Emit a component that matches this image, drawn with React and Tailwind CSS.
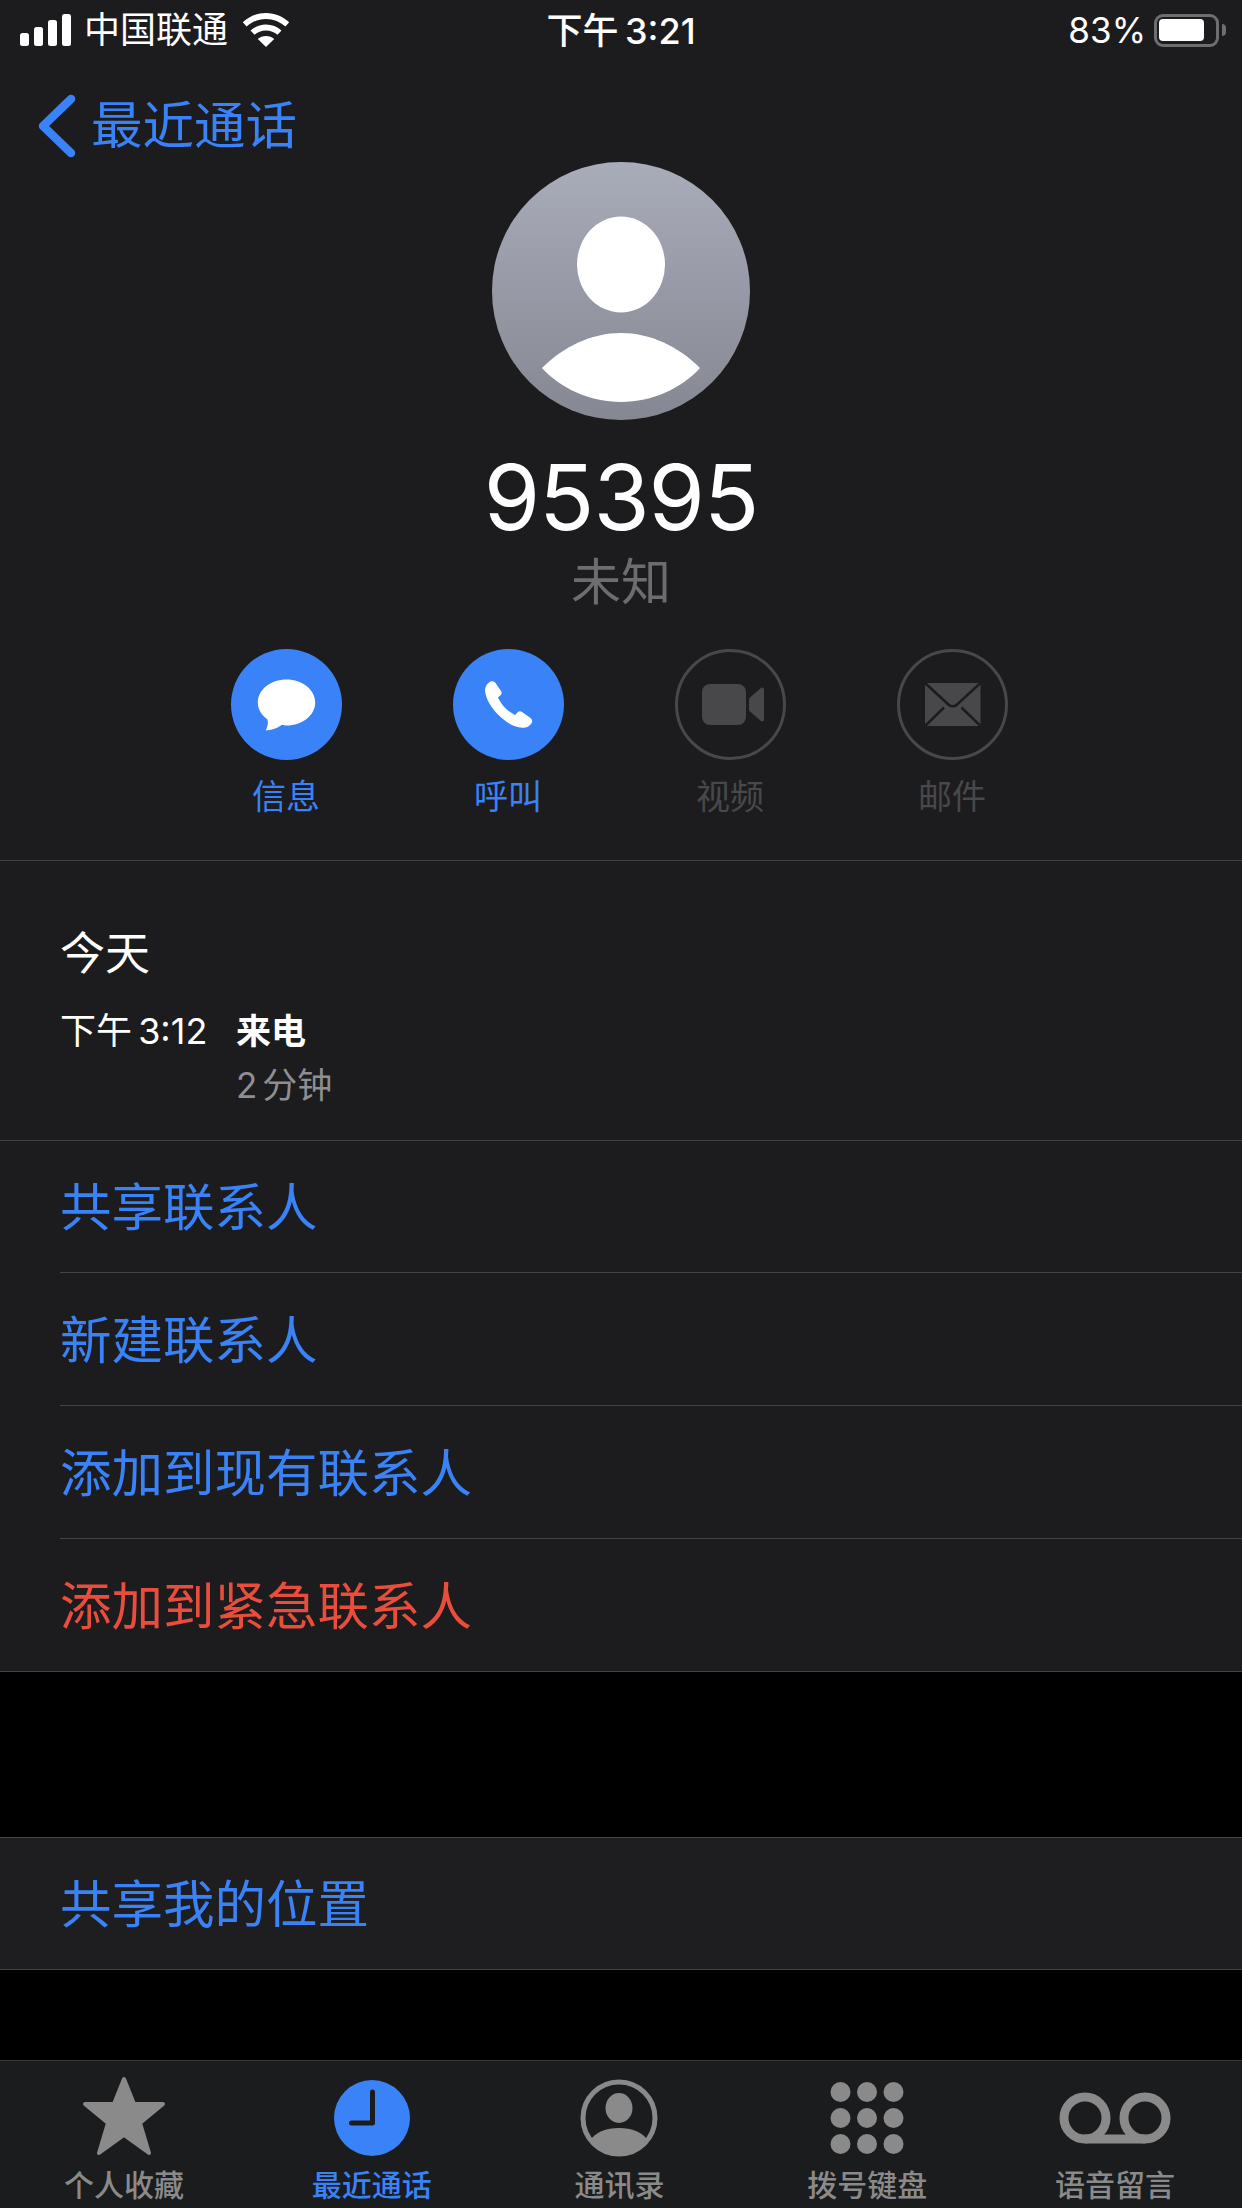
import React from 'react';

const FONT = 'font-[Inter,"Noto_Sans_CJK_SC",sans-serif]';

function StatusBar() {
  return (
    <div className="grid grid-cols-3 h-[60px] text-white">
      <div className="flex items-center pl-[20px]">
        <svg width="52" height="34" viewBox="0 0 52 34" className="fill-white">
          <rect x="0" y="20" width="9" height="13" rx="2.5" />
          <rect x="14" y="14" width="9" height="19" rx="2.5" />
          <rect x="28" y="7" width="9" height="26" rx="2.5" />
          <rect x="42" y="1" width="9" height="32" rx="2.5" />
        </svg>
        <span className="ml-[12px] text-[36px] leading-none">中国联通</span>
        <svg width="48" height="34" viewBox="0 0 48 34" className="ml-[14px] fill-white">
          <path d="M24 0C15 0 7 3.500 .8 9.300L4.600 13.600C9.700 9 16.500 6 24 6s14.300 3 19.400 7.600l3.800-4.300C41 3.500 33 0 24 0Z" />
          <path d="M24 11.500c-6 0-11.400 2.300-15.500 6l4 4.300c3-2.700 7-4.300 11.500-4.300s8.500 1.600 11.500 4.300l4-4.300c-4.100-3.700-9.500-6-15.500-6Z" />
          <path d="M24 23c-3.200 0-6 1.200-8.200 3.100L24 34l8.200-7.900C30 24.200 27.200 23 24 23Z" />
        </svg>
      </div>
      <div className="flex items-center justify-center pt-[2px] text-[36px] font-medium leading-none [word-spacing:-3px]">下午 3:21</div>
      <div className="flex items-center justify-end pr-[16px]">
        <span className="text-[35px] leading-none">83%</span>
        <div className="ml-[8px] flex h-[33px] w-[65px] items-center rounded-[9px] border-[3px] border-[#6e6e70] pl-[2px]">
          <div className="h-[22px] w-[45px] rounded-[4px] bg-white" />
        </div>
        <div className="ml-[3px] h-[12px] w-[4px] rounded-r-full bg-[#6e6e70]" />
      </div>
    </div>
  );
}

function Avatar() {
  return (
    <svg width="258" height="258" viewBox="0 0 258 258">
      <defs>
        <linearGradient id="avatarBg" x1="0" y1="0" x2="0" y2="1">
          <stop offset="0" stopColor="#a9acb9" />
          <stop offset="1" stopColor="#858892" />
        </linearGradient>
      </defs>
      <circle cx="129" cy="129" r="129" fill="url(#avatarBg)" />
      <ellipse cx="129" cy="102.500" rx="44" ry="48" fill="#fff" />
      <path d="M50 206C72 184 100 171 129 171C158 171 186 184 208 206C190 226 160 240 129 240C98 240 68 226 50 206Z" fill="#fff" />
    </svg>
  );
}

function ActionButton({ label, active, children }) {
  return (
    <div className="flex w-[222px] flex-col items-center">
      <svg width="111" height="111" viewBox="0 0 111 111">
        {active ? (
          <circle cx="55.500" cy="55.500" r="55.500" fill="#3a82f7" />
        ) : (
          <circle cx="55.500" cy="55.500" r="54" fill="none" stroke="#48484a" strokeWidth="3" />
        )}
        {children}
      </svg>
      <div className={`mt-[12px] h-[50px] text-[34px] leading-[50px] ${active ? 'text-[#3a82f7]' : 'text-[#48484a]'}`}>
        {label}
      </div>
    </div>
  );
}

function ListRow({ label, color = 'text-[#3a82f7]', inset = true, height = 'h-[133px]' }) {
  return (
    <div className={`flex items-center border-b border-[#444446] pt-[3px] ${height} ${inset ? 'ml-[60px]' : 'pl-[60px]'}`}>
      <span className={`text-[51.500px] leading-none ${color}`}>{label}</span>
    </div>
  );
}

function TabItem({ label, active, children }) {
  return (
    <div className="flex flex-col items-center">
      <svg width="120" height="90" viewBox="0 0 120 90">{children}</svg>
      <div className={`h-[44px] text-[30px] font-medium leading-[44px] ${active ? 'text-[#3a82f7]' : 'text-[#8a8a8a]'}`}>
        {label}
      </div>
    </div>
  );
}

export default function App() {
  return (
    <div className={`flex h-[2208px] w-[1242px] flex-col overflow-hidden bg-black ${FONT}`}>
      <div className="bg-[#1c1c1e]">
        <StatusBar />

        {/* Back */}
        <div className="flex h-[102px] items-center pl-[38px] pt-[30px]">
          <svg width="38" height="64" viewBox="0 0 38 64" fill="none" stroke="#3a82f7" strokeWidth="8.500" strokeLinecap="round" strokeLinejoin="round">
            <path d="M33 5L5 32L33 59" />
          </svg>
          <span className="ml-[15px] text-[51.500px] leading-none text-[#3a82f7]">最近通话</span>
        </div>

        {/* Contact header */}
        <div className="flex flex-col items-center border-b border-[#444446] pb-[38px]">
          <Avatar />
          <div className="mt-[22px] h-[110px] text-[91px] font-normal leading-[110px] tracking-[-1px] text-white">95395</div>
          <div className="h-[60px] text-[50px] leading-[60px] text-[#6d6d70]">未知</div>
          <div className="mt-[37px] mr-[4px] flex">
            <ActionButton label="信息" active>
              <path d="M55.500 30.500C39.600 30.500 26.800 40.800 26.800 53.500C26.800 60.300 30.500 66.300 36.500 70.500C37.500 74 36.500 78 34.700 81.500C40 81.500 46 79.500 51 75.800C52.500 76 54 76.500 55.500 76.500C71.400 76.500 84.200 66.200 84.200 53.500C84.200 40.800 71.400 30.500 55.500 30.500Z" fill="#fff" />
            </ActionButton>
            <ActionButton label="呼叫" active>
              <path d="M36 33.500C38 31.500 41 32 42.500 34L48 42C49 43.500 48.800 45 47.500 46.200L45 48.500C47 53 49.500 56 52 58.800C55 61.800 58 64 62 66L64.500 63.500C65.800 62.200 67.500 62 69 63L77.500 69C79.500 70.500 79.800 73 78 75C75.500 77.800 73 79 69.500 78.800C60 78 52 72.500 45.500 66C38 58.500 33 50 32 42C31.800 38.500 33.500 35.500 36 33.500Z" fill="#fff" />
            </ActionButton>
            <ActionButton label="视频">
              <rect x="27" y="35" width="44" height="41" rx="8" fill="#48484a" />
              <path d="M75 48.500L86 39C87.500 38 89 38.800 89 40.500V70.500C89 72.200 87.500 73 86 72L75 62.500C74.300 62 74 61 74 60V51C74 50 74.300 49 75 48.500Z" fill="#48484a" />
            </ActionButton>
            <ActionButton label="邮件">
              <path d="M28 34H83.500V77H28Z" fill="#48484a" />
              <path d="M28 34L52 56C54 57.800 57.500 57.800 59.500 56L83.500 34M28 77L47 58.500M83.500 77L64.500 58.500" fill="none" stroke="#1c1c1e" strokeWidth="2.500" />
            </ActionButton>
          </div>
        </div>

        {/* Call history */}
        <div className="h-[280px] border-b border-[#444446] pl-[60px] pt-[61px]">
          <div className="h-[64px] text-[45px] leading-[64px] text-white">今天</div>
          <div className="mt-[20px] flex">
            <div className="w-[176px] text-[36px] leading-[50px] text-white [word-spacing:-4px]">下午 3:12</div>
            <div>
              <div className="text-[35px] font-semibold leading-[50px] text-white">来电</div>
              <div className="mt-[4px] text-[35px] leading-[50px] text-[#8e8e93] [word-spacing:-5px]">2 分钟</div>
            </div>
          </div>
        </div>

        <ListRow label="共享联系人" height="h-[132px]" />
        <ListRow label="新建联系人" />
        <ListRow label="添加到现有联系人" />
        <ListRow label="添加到紧急联系人" color="text-[#eb4d3d]" inset={false} />
      </div>

      {/* Share location */}
      <div className="mt-[165px] border-t border-[#444446] bg-[#1e1e20]">
        <ListRow label="共享我的位置" inset={false} height="h-[132px]" />
      </div>

      {/* Tab bar */}
      <div className="mt-[90px] grid flex-1 grid-cols-5 border-t border-[#38383a] bg-[#1b1c1e] pr-[3px] pt-[12px]">
        <TabItem label="个人收藏">
          <path d="M60 6L70 31H99L76 50L85 80L60 62L35 80L44 50L21 31H50Z" fill="#8a8a8a" stroke="#8a8a8a" strokeWidth="4" strokeLinejoin="round" />
        </TabItem>
        <TabItem label="最近通话" active>
          <circle cx="60" cy="45" r="38" fill="#3a82f7" />
          <path d="M60.500 19V50H39.500" fill="none" stroke="#1c1c1e" strokeWidth="5" strokeLinecap="round" strokeLinejoin="round" />
        </TabItem>
        <TabItem label="通讯录">
          <circle cx="60" cy="45" r="36" fill="none" stroke="#8a8a8a" strokeWidth="5" />
          <ellipse cx="60" cy="35" rx="13.500" ry="15" fill="#8a8a8a" />
          <path d="M31 68C36 59 47 55 60 55C73 55 84 59 89 68C82 76 71 81 60 81C49 81 38 76 31 68Z" fill="#8a8a8a" />
        </TabItem>
        <TabItem label="拨号键盘">
          {[19, 45, 71].map((cy) =>
            [33.500, 60, 86.500].map((cx) => <circle key={`${cx}-${cy}`} cx={cx} cy={cy} r="10" fill="#8a8a8a" />)
          )}
        </TabItem>
        <TabItem label="语音留言">
          <g fill="none" stroke="#8a8a8a" strokeWidth="9">
            <circle cx="30" cy="45" r="21" />
            <circle cx="90" cy="45" r="21" />
            <path d="M30 66H90" />
          </g>
        </TabItem>
      </div>
    </div>
  );
}
